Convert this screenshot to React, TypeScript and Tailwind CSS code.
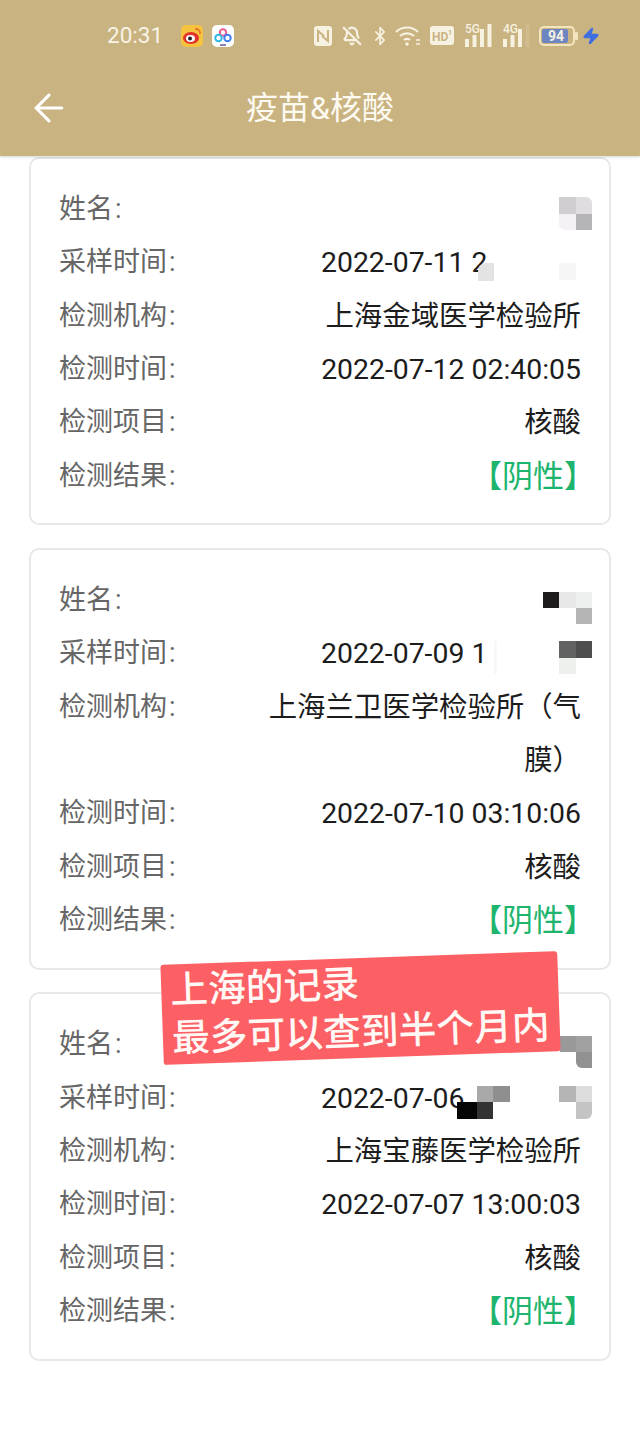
import React from 'react';
import { ArrowLeft, BellOff, Bluetooth, Zap } from 'lucide-react';

const Bars: React.FC<{ label: string; faded?: boolean }> = ({ label, faded }) => (
  <svg width="28" height="26" viewBox="0 0 28 26" className="text-[#f7f1e1]">
    <text x="0" y="10" fontSize="12" fontWeight="500" fill="currentColor" fontFamily="Roboto, sans-serif">{label}</text>
    <rect x="0" y="16" width="4" height="8" fill="currentColor" />
    <rect x="7.5" y="12" width="4" height="12" fill="currentColor" />
    <rect x="15" y="6" width="4" height="18" fill="currentColor" />
    <rect x="22.5" y="1" width="4" height="23" fill="currentColor" opacity={faded ? 0.15 : 1} />
  </svg>
);

const StatusBar = () => (
  <div className="flex h-[72px] items-center pl-[107px] text-[#f7f1e1]">
    <span className="w-[74px] text-[22.5px] font-['Roboto',sans-serif] text-[#f8f3e6]">20:31</span>
    <svg width="22" height="22" viewBox="0 0 22 22">
      <rect width="22" height="22" rx="5" fill="#f6c33f" />
      <ellipse cx="10" cy="13" rx="8" ry="6" fill="#e0332b" />
      <ellipse cx="9.5" cy="13.5" rx="4.5" ry="3.4" fill="#fff" />
      <circle cx="9" cy="13.5" r="2" fill="#222" />
      <path d="M14 4c3-.6 5.5 1.8 5 5" fill="none" stroke="#e8702a" strokeWidth="1.6" />
    </svg>
    <svg width="22" height="22" viewBox="0 0 22 22" className="ml-[9px]">
      <rect width="22" height="22" rx="5" fill="#fff" />
      <circle cx="11" cy="7.5" r="3.2" fill="none" stroke="#ef5a8f" strokeWidth="2" />
      <circle cx="6.5" cy="13" r="3.2" fill="none" stroke="#2fb9e8" strokeWidth="2" />
      <circle cx="15.5" cy="13" r="3.2" fill="none" stroke="#3f7ff0" strokeWidth="2" />
      <rect x="8" y="19" width="6" height="2" fill="#8d7fb5" />
    </svg>

    <svg width="18" height="20" viewBox="0 0 18 20" className="ml-[80px]">
      <rect width="18" height="20" rx="3" fill="#f7f1e1" />
      <path d="M4 16V5l6 5M14 4v11l-6-5" fill="none" stroke="#c9b380" strokeWidth="2" />
    </svg>
    <BellOff size={20} strokeWidth={2.6} className="ml-[10px]" />
    <Bluetooth size={20} strokeWidth={2} className="ml-[8px]" />
    <svg width="26" height="22" viewBox="0 0 26 22" className="ml-[5px]">
      <path d="M1 7c6-6 16-6 22 0M5 11c4-3.6 10-3.6 14 0M9 15c2-1.6 4-1.6 6 0" fill="none" stroke="currentColor" strokeWidth="2.2" />
      <circle cx="12" cy="19" r="1.8" fill="currentColor" />
      <path d="M21 15h4M21 19h4" stroke="currentColor" strokeWidth="1.6" />
    </svg>
    <svg width="24" height="20" viewBox="0 0 24 20" className="ml-[9px]">
      <rect width="24" height="19" rx="3" fill="#f7f1e1" />
      <text x="2" y="14.5" fontSize="12" fontWeight="700" fill="#c9b380" fontFamily="Roboto, sans-serif">HD</text>
      <text x="18" y="9" fontSize="7" fontWeight="700" fill="#c9b380" fontFamily="Roboto, sans-serif">1</text>
    </svg>
    <div className="ml-[11px] flex">
      <Bars label="5G" />
    </div>
    <div className="ml-[10px] flex">
      <Bars label="4G" faded />
    </div>
    <svg width="40" height="20" viewBox="0 0 40 20" className="ml-[8px]">
      <rect x="1" y="1" width="34" height="18" rx="4" fill="none" stroke="#f3e6bf" strokeWidth="2" />
      <rect x="36" y="6" width="3" height="8" rx="1" fill="#f3e6bf" />
      <rect x="3" y="3" width="26" height="14" rx="2" fill="#6d86c2" />
      <text x="9" y="15" fontSize="14" fontWeight="700" fill="#f7f1e1" fontFamily="Roboto, sans-serif">94</text>
    </svg>
    <Zap size={18} fill="#3f6fe0" stroke="#3f6fe0" className="ml-[3px]" />
  </div>
);

const Row: React.FC<{ label: string; children: React.ReactNode }> = ({ label, children }) => (
  <div className="flex min-h-[53.33px] items-start justify-between leading-[53.33px]">
    <span className="shrink-0 text-[27px] text-[#666666]">
      {label}
      <span className="ml-[2px]">:</span>
    </span>
    {children}
  </div>
);

const Value: React.FC<{ children: React.ReactNode }> = ({ children }) => (
  <span className="w-[320px] text-right text-[#1c1c1c]">{children}</span>
);

// the date is cut off by the mosaic, so it starts from the left of a fixed box
const MaskedDate: React.FC<{ text: string; children: React.ReactNode }> = ({ text, children }) => (
  <div className="-mr-[11px] flex h-[53.33px] w-[271px] items-start text-[#1c1c1c]">
    <span className="shrink-0 whitespace-pre">{text}</span>
    {children}
  </div>
);

const Result = () => (
  <Row label="检测结果">
    <span className="-mr-[14px] text-[31px] text-[#1db56e]">【阴性】</span>
  </Row>
);

export default function App() {
  return (
    <div className="min-h-[1429px] w-[640px] overflow-hidden bg-white font-['Roboto','Noto_Sans_CJK_SC',sans-serif] text-[28.4px]">
      {/* Header */}
      <header className="relative z-10 h-[156px] bg-[#c9b380] shadow-[0_1px_3px_rgba(0,0,0,0.18)]">
        <StatusBar />
        <div className="flex h-[70px] items-center px-[27px] pt-[1px]">
          <ArrowLeft size={44} strokeWidth={1.7} className="shrink-0 text-white" />
          <h1 className="flex-1 pr-[44px] text-center text-[32px] font-normal text-[#fdfaf2]">疫苗&amp;核酸</h1>
        </div>
      </header>

      {/* Records */}
      <main className="mt-px flex flex-col gap-[22.5px] px-[29px]">
        <section className="rounded-[10px] border-2 border-[#e8e8e8] bg-white px-[28px] pb-[20.5px] pt-[24px]">
          <Row label="姓名">
            <div className="-mr-[11px] mt-[14px] grid grid-cols-[17px_16px] grid-rows-[17px_16px]">
              <div className="bg-[#d0ced0]" />
              <div className="rounded-tr-[6px] bg-[#dfdddf]" />
              <div className="rounded-bl-[6px] bg-[#f5f2f5]" />
              <div className="bg-[#b4b3b5]" />
            </div>
          </Row>
          <Row label="采样时间">
            <MaskedDate text="2022-07-11 2">
              <div className="-ml-[9px] mt-[27px] h-[18px] w-[16px] rounded-tl-[8px] bg-[#e3e3e3]" />
              <div className="ml-[65px] mt-[27px] h-[17px] w-[17px] bg-[#f6f6f6]" />
            </MaskedDate>
          </Row>
          <Row label="检测机构"><Value>上海金域医学检验所</Value></Row>
          <Row label="检测时间"><Value>2022-07-12 02:40:05</Value></Row>
          <Row label="检测项目"><Value>核酸</Value></Row>
          <Result />
        </section>

        <section className="rounded-[10px] border-2 border-[#e8e8e8] bg-white px-[28px] pb-[20.5px] pt-[24px]">
          <Row label="姓名">
            <div className="-mr-[11px] mt-[18px] grid grid-cols-[16px_17px_16px] grid-rows-[16px_16px]">
              <div className="bg-[#1f1b1c]" />
              <div className="bg-[#e8e8e8]" />
              <div className="bg-[#eef0f0]" />
              <div className="col-start-3 bg-[#b4b4b4]" />
            </div>
          </Row>
          <Row label="采样时间">
            <MaskedDate text="2022-07-09 1">
              <div className="ml-[7px] mt-[14px] h-[33px] w-[16px] bg-[#f8f8f8]" />
              <div className="ml-[62px] mt-[14px] grid grid-cols-[17px_16px] grid-rows-[17px_16px]">
                <div className="bg-[#626262]" />
                <div className="bg-[#4e4e4e]" />
                <div className="bg-[#eef0ee]" />
              </div>
            </MaskedDate>
          </Row>
          <Row label="检测机构"><Value>上海兰卫医学检验所（气膜）</Value></Row>
          <Row label="检测时间"><Value>2022-07-10 03:10:06</Value></Row>
          <Row label="检测项目"><Value>核酸</Value></Row>
          <Result />
        </section>

        <section className="rounded-[10px] border-2 border-[#e8e8e8] bg-white px-[28px] pb-[20.5px] pt-[24px]">
          <Row label="姓名">
            <div className="-mr-[11px] mt-[18px] grid grid-cols-[16px_16px] grid-rows-[16px_16px]">
              <div className="bg-[#999999]" />
              <div className="bg-[#a0a0a0]" />
              <div className="col-start-2 rounded-bl-[6px] bg-[#919191]" />
            </div>
          </Row>
          <Row label="采样时间">
            <MaskedDate text="2022-07-06">
              <div className="-ml-[7px] mt-[14px] grid shrink-0 grid-cols-[20px_16px_17px] grid-rows-[16px_17px]">
                <div />
                <div className="bg-[#a9a9a9]" />
                <div className="bg-[#8f8f8f]" />
                <div className="bg-[#050505]" />
                <div className="bg-[#333333]" />
              </div>
              <div className="ml-[49px] mt-[14px] grid shrink-0 grid-cols-[17px_16px] grid-rows-[16px_17px]">
                <div className="bg-[#b4b4b4]" />
                <div className="bg-[#dcdcdc]" />
                <div className="col-start-2 rounded-br-[6px] bg-[#c4c4c4]" />
              </div>
            </MaskedDate>
          </Row>
          <Row label="检测机构"><Value>上海宝藤医学检验所</Value></Row>
          <Row label="检测时间"><Value>2022-07-07 13:00:03</Value></Row>
          <Row label="检测项目"><Value>核酸</Value></Row>
          <Result />
        </section>
      </main>

      {/* Red note pasted on top */}
      <div className="absolute left-[162px] top-[958px] h-[100px] w-[397px] -rotate-2 rounded-[3px] bg-[#fc6064] pl-[9px] pt-[2px] text-[37.8px] font-medium leading-[48px] text-[#fff8f4]">
        <div>上海的记录</div>
        <div>最多可以查到半个月内</div>
      </div>
    </div>
  );
}
